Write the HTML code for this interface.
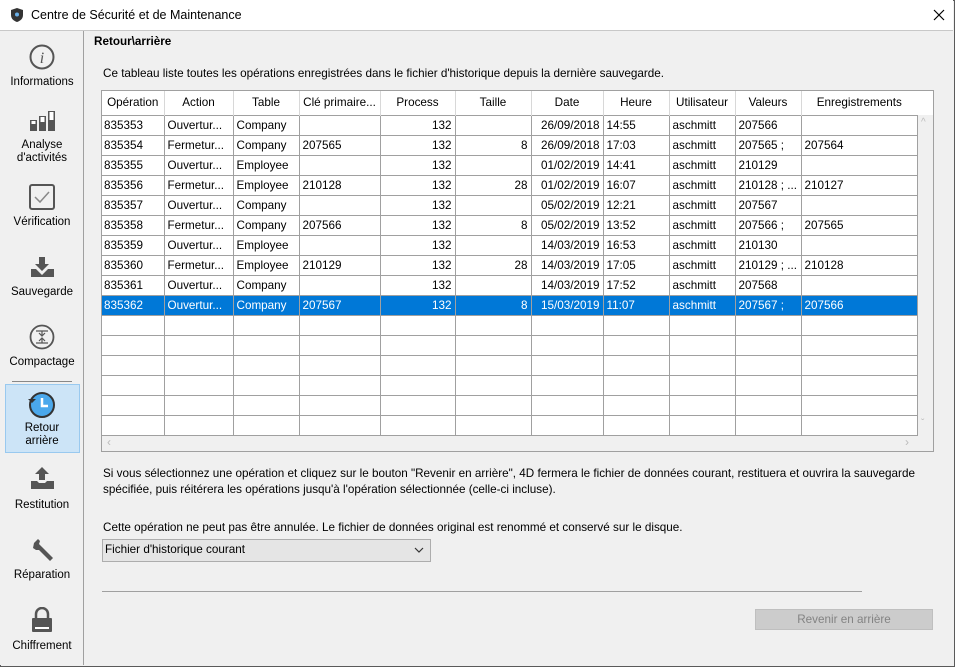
<!DOCTYPE html>
<html><head><meta charset="utf-8"><style>
*{box-sizing:border-box;margin:0;padding:0}
body{width:955px;height:667px;overflow:hidden;font-family:"Liberation Sans",sans-serif;font-size:11.7px;color:#000;background:#f0f0f0;position:relative}
.a{position:absolute}
#win{left:0;top:0;width:955px;height:667px;border:1px solid #5a5a5a}
#title{left:0;top:0;width:953px;height:31px;background:#fff;border-bottom:1px solid #c8c8c8}
#side{left:0;top:31px;width:84px;height:634px;background:#f0f0f0;border-right:1px solid #a0a0a0}
.lbl{width:84px;text-align:center;font-size:11.5px;line-height:13px;left:0}
table{position:absolute;left:102px;top:91px;border-collapse:collapse;table-layout:fixed;background:#fff}
td,th{height:20px;border:1px solid #a0a0a0;padding:0 3px;white-space:nowrap;overflow:hidden;font-weight:normal;font-size:11.7px}
td:first-child{border-left:none;padding-left:2px}
th{height:24px;border:none;border-left:1px solid #d8d8d8;text-align:center}
th:first-child{border-left:none}
td.r{text-align:right}
tr.sel td{background:#0078d7;color:#fff}
</style></head><body>
<div class="a" id="win"></div>
<div class="a" id="title">
 <svg class="a" style="left:10px;top:7px" width="14" height="16" viewBox="0 0 14 16"><path d="M7 1 L13 3 V8 C13 12 10 14 7 15 C4 14 1 12 1 8 V3 Z" fill="#333"/><circle cx="7" cy="7.5" r="2" fill="#6ab0e8"/></svg>
 <div class="a" style="left:31px;top:8px;font-size:12.5px">Centre de Sécurité et de Maintenance</div>
 <svg class="a" style="left:933px;top:9px" width="12" height="12"><path d="M1 1L11 11M11 1L1 11" stroke="#000" stroke-width="1.2"/></svg>
</div>
<div class="a" id="side">
 <svg class="a" style="left:29px;top:13px" width="26" height="26"><circle cx="13" cy="13" r="11.5" fill="none" stroke="#555" stroke-width="2"/><text x="13" y="19" font-family="Liberation Serif" font-style="italic" font-size="16" text-anchor="middle" fill="#555">i</text></svg>
 <div class="a lbl" style="top:45px">Informations</div>
 <svg class="a" style="left:29px;top:79px" width="27" height="22"><rect x="1" y="10" width="7" height="11" fill="#555"/><rect x="10" y="6" width="7" height="15" fill="#555"/><rect x="19" y="1" width="7" height="20" fill="#555"/><rect x="2.5" y="11" width="4" height="3" fill="#fff"/><rect x="11.5" y="7" width="4" height="5" fill="#fff"/><rect x="20.5" y="2" width="4" height="8" fill="#fff"/></svg>
 <div class="a lbl" style="top:108px">Analyse<br>d'activités</div>
 <svg class="a" style="left:29px;top:153px" width="26" height="26"><rect x="1" y="1" width="24" height="24" rx="2" fill="none" stroke="#555" stroke-width="2"/><path d="M6 13l5 5 9-10" fill="none" stroke="#888" stroke-width="1.5"/></svg>
 <div class="a lbl" style="top:185px">Vérification</div>
 <svg class="a" style="left:30px;top:225px" width="25" height="22"><path d="M9 1h6v7h4l-7 7-7-7h4z" fill="#555"/><path d="M1 13h5l6 6 6-6h6v8H1z" fill="#555"/></svg>
 <div class="a lbl" style="top:255px">Sauvegarde</div>
 <svg class="a" style="left:29px;top:293px" width="26" height="26"><circle cx="13" cy="13" r="11.5" fill="none" stroke="#555" stroke-width="1.8"/><path d="M7 7h12M13 7v4M10 9l3 3 3-3M7 19h12M13 19v-4M10 17l3-3 3 3" fill="none" stroke="#555" stroke-width="1.2"/></svg>
 <div class="a lbl" style="top:325px">Compactage</div>
 <div class="a" style="left:12px;top:350px;width:60px;height:1px;background:#888"></div>
 <div class="a" style="left:5px;top:353px;width:75px;height:69px;background:#cce4f7;border:1px solid #99c9ef"></div>
 <svg class="a" style="left:27px;top:359px" width="30" height="30"><circle cx="15" cy="15" r="12" fill="#4aa8ec" stroke="#333" stroke-width="2"/><path d="M15 8v8h6" stroke="#fff" stroke-width="2.5" fill="none"/><path d="M1 9l4 4 4-4z" fill="#333"/></svg>
 <div class="a lbl" style="top:391px">Retour<br>arrière</div>
 <svg class="a" style="left:30px;top:435px" width="25" height="24"><path d="M12 1l7 7h-4v6h-6v-6h-4z" fill="#555"/><path d="M1 15h6l2 2h6l2-2h7v8H1z" fill="#555"/></svg>
 <div class="a lbl" style="top:468px">Restitution</div>
 <svg class="a" style="left:31px;top:507px" width="24" height="24"><path d="M3 5l4-4 2 2-1 3 3 3 11 11-3 3L8 12l-3 0-3-2z" fill="#555"/></svg>
 <div class="a lbl" style="top:538px">Réparation</div>
 <svg class="a" style="left:31px;top:576px" width="22" height="26"><path d="M5 11V7a6 6 0 0 1 12 0v4" fill="none" stroke="#555" stroke-width="2.5"/><rect x="1" y="11" width="20" height="14" rx="1" fill="#555"/><rect x="4" y="20" width="14" height="2" fill="#fff"/></svg>
 <div class="a lbl" style="top:609px">Chiffrement</div>
</div>
<div class="a" style="left:94px;top:35px;font-weight:bold">Retour\arrière</div>
<div class="a" style="left:103px;top:67px">Ce tableau liste toutes les opérations enregistrées dans le fichier d'historique depuis la dernière sauvegarde.</div>
<div class="a" style="left:101px;top:90px;width:833px;height:362px;border:1px solid #a0a0a0;background:#f0f0f0"></div>
<div class="a" style="left:917px;top:91px;width:16px;height:24px;background:#fff"></div>
<div class="a" style="left:921px;top:117px;color:#bbb;font-size:10px">&#94;</div>
<div class="a" style="left:921px;top:418px;color:#bbb;font-size:10px">&#711;</div>
<div class="a" style="left:107px;top:435px;color:#bbb;font-size:12px">&lsaquo;</div>
<div class="a" style="left:905px;top:435px;color:#bbb;font-size:12px">&rsaquo;</div>
<table>
<colgroup><col style="width:62px"><col style="width:69px"><col style="width:66px"><col style="width:81px"><col style="width:75px"><col style="width:76px"><col style="width:72px"><col style="width:66px"><col style="width:66px"><col style="width:66px"><col style="width:116px"></colgroup>
<tr><th>Opération</th><th>Action</th><th>Table</th><th>Clé primaire...</th><th>Process</th><th>Taille</th><th>Date</th><th>Heure</th><th>Utilisateur</th><th>Valeurs</th><th>Enregistrements</th></tr>
<tr><td>835353</td><td>Ouvertur...</td><td>Company</td><td></td><td class="r">132</td><td></td><td class="r">26/09/2018</td><td>14:55</td><td>aschmitt</td><td>207566</td><td></td></tr>
<tr><td>835354</td><td>Fermetur...</td><td>Company</td><td>207565</td><td class="r">132</td><td class="r">8</td><td class="r">26/09/2018</td><td>17:03</td><td>aschmitt</td><td>207565 ;</td><td>207564</td></tr>
<tr><td>835355</td><td>Ouvertur...</td><td>Employee</td><td></td><td class="r">132</td><td></td><td class="r">01/02/2019</td><td>14:41</td><td>aschmitt</td><td>210129</td><td></td></tr>
<tr><td>835356</td><td>Fermetur...</td><td>Employee</td><td>210128</td><td class="r">132</td><td class="r">28</td><td class="r">01/02/2019</td><td>16:07</td><td>aschmitt</td><td>210128 ; ...</td><td>210127</td></tr>
<tr><td>835357</td><td>Ouvertur...</td><td>Company</td><td></td><td class="r">132</td><td></td><td class="r">05/02/2019</td><td>12:21</td><td>aschmitt</td><td>207567</td><td></td></tr>
<tr><td>835358</td><td>Fermetur...</td><td>Company</td><td>207566</td><td class="r">132</td><td class="r">8</td><td class="r">05/02/2019</td><td>13:52</td><td>aschmitt</td><td>207566 ;</td><td>207565</td></tr>
<tr><td>835359</td><td>Ouvertur...</td><td>Employee</td><td></td><td class="r">132</td><td></td><td class="r">14/03/2019</td><td>16:53</td><td>aschmitt</td><td>210130</td><td></td></tr>
<tr><td>835360</td><td>Fermetur...</td><td>Employee</td><td>210129</td><td class="r">132</td><td class="r">28</td><td class="r">14/03/2019</td><td>17:05</td><td>aschmitt</td><td>210129 ; ...</td><td>210128</td></tr>
<tr><td>835361</td><td>Ouvertur...</td><td>Company</td><td></td><td class="r">132</td><td></td><td class="r">14/03/2019</td><td>17:52</td><td>aschmitt</td><td>207568</td><td></td></tr>
<tr class="sel"><td>835362</td><td>Ouvertur...</td><td>Company</td><td>207567</td><td class="r">132</td><td class="r">8</td><td class="r">15/03/2019</td><td>11:07</td><td>aschmitt</td><td>207567 ;</td><td>207566</td></tr>
<tr><td></td><td></td><td></td><td></td><td></td><td></td><td></td><td></td><td></td><td></td><td></td></tr>
<tr><td></td><td></td><td></td><td></td><td></td><td></td><td></td><td></td><td></td><td></td><td></td></tr>
<tr><td></td><td></td><td></td><td></td><td></td><td></td><td></td><td></td><td></td><td></td><td></td></tr>
<tr><td></td><td></td><td></td><td></td><td></td><td></td><td></td><td></td><td></td><td></td><td></td></tr>
<tr><td></td><td></td><td></td><td></td><td></td><td></td><td></td><td></td><td></td><td></td><td></td></tr>
<tr><td></td><td></td><td></td><td></td><td></td><td></td><td></td><td></td><td></td><td></td><td></td></tr>
</table>
<div class="a" style="left:103px;top:466px;line-height:16px">Si vous sélectionnez une opération et cliquez sur le bouton "Revenir en arrière", 4D fermera le fichier de données courant, restituera et ouvrira la sauvegarde<br>spécifiée, puis réitérera les opérations jusqu'à l'opération sélectionnée (celle-ci incluse).</div>
<div class="a" style="left:103px;top:521px">Cette opération ne peut pas être annulée. Le fichier de données original est renommé et conservé sur le disque.</div>
<div class="a" style="left:102px;top:539px;width:329px;height:23px;background:#e5e5e5;border:1px solid #adadad;padding:3px 2px">Fichier d'historique courant</div>
<svg class="a" style="left:414px;top:547px" width="10" height="6"><path d="M1 1l4 4 4-4" fill="none" stroke="#333" stroke-width="1.2"/></svg>
<div class="a" style="left:102px;top:591px;width:760px;height:1px;background:#a0a0a0"></div>
<div class="a" style="left:755px;top:609px;width:178px;height:21px;background:#cccccc;border:1px solid #bfbfbf;color:#838383;text-align:center;line-height:19px">Revenir en arrière</div>
</body></html>
